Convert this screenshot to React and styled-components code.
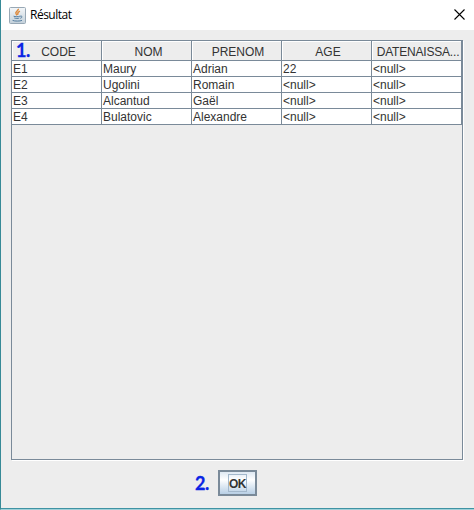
import React from "react";
import styled, { createGlobalStyle } from "styled-components";

const line = "#7a8a99";

const GlobalStyle = createGlobalStyle`
  * { box-sizing: border-box; }
  html, body { margin: 0; overflow: hidden; background: #ededed; }
`;

const Window = styled.main`
  width: 474px;
  height: 510px;
  display: flex;
  flex-direction: column;
  background: #ededed;
  border-left: 1px solid #378a97;
  border-bottom: 1px solid #9fd0d8;
  box-shadow: inset 0 -1px 0 #3f93a3;
  font: 12px/15px "Liberation Sans", Arial, sans-serif;
  color: #333;
`;

const TitleBar = styled.header`
  height: 30px;
  flex: none;
  display: flex;
  align-items: center;
  padding: 0 9px 0 8px;
  background: #fff;
`;

const Title = styled.h1`
  margin: -1px auto 0 4px;
  font: 12px/16px "Open Sans", sans-serif;
  letter-spacing: -0.5px;
  color: #000;
`;

const CloseButton = styled.button`
  width: 11px;
  height: 11px;
  padding: 0;
  border: 0;
  background: none;
  display: flex;
  margin-top: -2px;
`;

const ScrollPane = styled.section`
  width: 452px;
  height: 420px;
  margin: 10px 0 0 10px;
  border: 1px solid ${line};
  box-shadow: 1px 1px 0 #fff;
`;

const Row = styled.div`
  display: grid;
  grid-template-columns: repeat(5, 90px);
`;

const HeaderCell = styled.div`
  position: relative;
  height: 20px;
  padding-top: 4px;
  text-align: center;
  white-space: nowrap;
  letter-spacing: ${(p) => p.$spacing || 0}px;
  text-indent: ${(p) => p.$indent || 0}px;
  border-right: 1px solid ${line};
  border-bottom: 1px solid ${line};
  box-shadow: inset 1px 1px 0 #fff;
`;

const Cell = styled.div`
  height: 16px;
  padding-left: 1px;
  line-height: 17px;
  background: #fff;
  border-right: 1px solid ${line};
  border-bottom: 1px solid ${line};
`;

const Marker = styled.span`
  font: 700 18px/20px Lato, sans-serif;
  letter-spacing: -0.4px;
  text-indent: 0;
  color: #0a24e4;
  -webkit-text-stroke: 0.3px #0a24e4;
`;

const HeaderMarker = styled(Marker)`
  position: absolute;
  left: 4px;
  top: -1px;
`;

const Footer = styled.footer`
  display: flex;
  align-items: center;
  margin: 10px 0 0 194px;
`;

const OkButton = styled.button`
  width: 39px;
  height: 26px;
  padding: 0;
  display: flex;
  align-items: center;
  justify-content: center;
  border: 2px solid ${line};
  background: linear-gradient(#dfe9f3, #fff 35%, #e8f0f7 55%, #b8cfe5);
`;

const FooterMarker = styled(Marker)`
  width: 23px;
`;

const FocusLabel = styled.span`
  width: 19px;
  height: 18px;
  border: 1px solid #a3b8cc;
  font: bold 12px/18px "Liberation Sans", Arial, sans-serif;
  letter-spacing: -0.5px;
  text-align: center;
  color: #333;
`;

const columns = [
  { label: "CODE", indent: 4 },
  { label: "NOM", indent: 4 },
  { label: "PRENOM", indent: 3 },
  { label: "AGE", indent: 3 },
  { label: "DATENAISSA...", indent: 3, spacing: -0.2 },
];

const people = [
  ["E1", "Maury", "Adrian", "22", "<null>"],
  ["E2", "Ugolini", "Romain", "<null>", "<null>"],
  ["E3", "Alcantud", "Gaël", "<null>", "<null>"],
  ["E4", "Bulatovic", "Alexandre", "<null>", "<null>"],
];

function JavaIcon() {
  return (
    <svg width="17" height="17" viewBox="0 0 17 17" fill="none">
      <defs>
        <linearGradient id="tile" x2="0" y2="1">
          <stop stopColor="#f4f7f9" />
          <stop offset="1" stopColor="#c3d0da" />
        </linearGradient>
      </defs>
      <rect x=".5" y=".5" width="16" height="16" rx="1" fill="url(#tile)" stroke="#98a8b5" />
      <path d="M9.3 1.8c.6 2-3.5 2.7-2.3 4.9L8.1 8.2M10.9 4.2C8.9 5.2 8.3 6 9.2 7.6" stroke="#dd8a3c" strokeWidth="1.5" />
      <path d="M4.6 9.2c1.5.7 4.8.6 6.3 0M5.3 11c1.4.6 3.6.6 5 0M11.1 9.2c2.3-.8 2.6 1.5.2 2.1M3.6 13.4c2 .9 7.4.9 9.4 0" stroke="#547d9f" />
    </svg>
  );
}

export default function App() {
  return (
    <>
      <GlobalStyle />
      <Window>
        <TitleBar>
          <JavaIcon />
          <Title>Résultat</Title>
          <CloseButton aria-label="Fermer">
            <svg width="11" height="11" viewBox="0 0 11 11">
              <path d="M.5.5l10 10M10.5.5l-10 10" stroke="#000" strokeWidth="1.1" />
            </svg>
          </CloseButton>
        </TitleBar>
        <ScrollPane>
          <Row>
            {columns.map((c, i) => (
              <HeaderCell key={c.label} $indent={c.indent} $spacing={c.spacing}>
                {i === 0 && <HeaderMarker>1.</HeaderMarker>}
                {c.label}
              </HeaderCell>
            ))}
          </Row>
          {people.map((person) => (
            <Row key={person[0]}>
              {person.map((value, i) => (
                <Cell key={i}>{value}</Cell>
              ))}
            </Row>
          ))}
        </ScrollPane>
        <Footer>
          <FooterMarker>2.</FooterMarker>
          <OkButton>
            <FocusLabel>OK</FocusLabel>
          </OkButton>
        </Footer>
      </Window>
    </>
  );
}
